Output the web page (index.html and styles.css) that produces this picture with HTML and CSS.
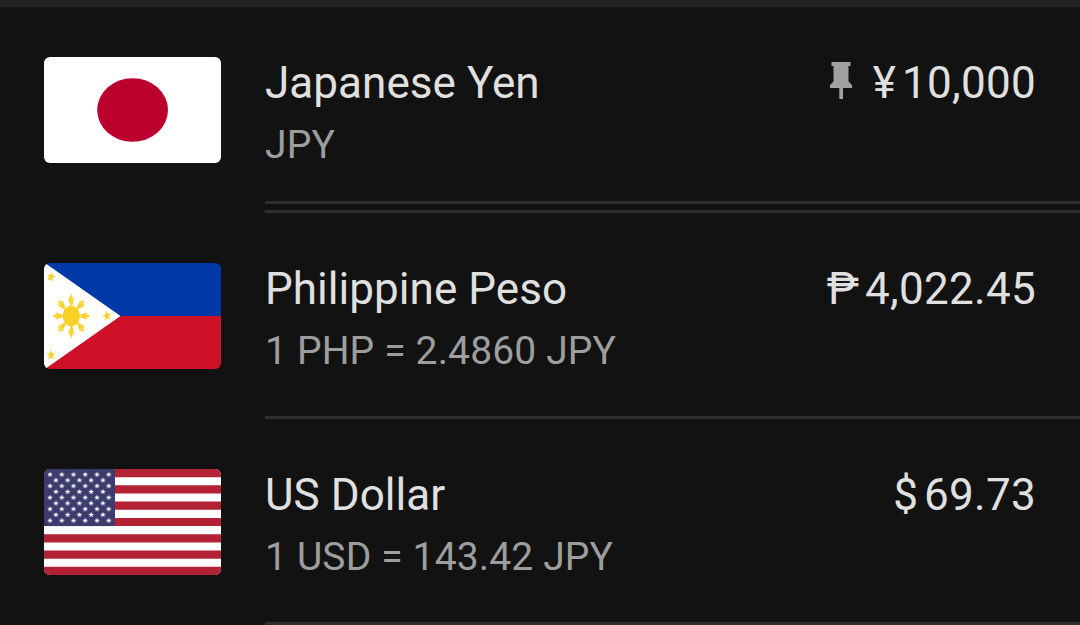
FILE: index.html
```
<!DOCTYPE html>
<html lang="en">
<head>
<meta charset="UTF-8" />
<meta name="viewport" content="width=device-width, initial-scale=1.0" />
<title>Currency Converter</title>
<link rel="stylesheet" href="styles.css">
</head>
<body>

<div class="top-bar"></div>

<div class="currency-list">
  <!-- Base currency -->
  <div class="row row-base">
    <svg class="flag" viewBox="0 0 177 106">
      <rect width="177" height="106" fill="#fff"/>
      <ellipse cx="88.6" cy="53" rx="35.4" ry="31.8" fill="#bc002d"/>
    </svg>
    <div class="row-body">
      <div class="info">
        <div class="name">Japanese Yen</div>
        <div class="rate">JPY</div>
      </div>
      <div class="amount">
        <svg class="pin" viewBox="0 0 22 37">
          <path d="M1.5 0H20.5V4H18.5V19.5L22 23V26H13V37H9.3V26H0V23L3.5 19.5V4H1.5Z" fill="#a0a0a0"/>
        </svg>
        <span class="symbol">¥</span><span class="value">10,000</span>
      </div>
    </div>
  </div>

  <div class="row">
    <svg class="flag" viewBox="0 0 177 106">
      <defs>
        <path id="star" d="M0-5L1.2-1.6 4.8-1.5 1.9.6 2.9 4 0 2 -2.9 4 -1.9.6 -4.8-1.5 -1.2-1.6Z"/>
        <path id="ray" d="M-.8-9L-1-21.5H1L.8-9ZM-.8-9L-3.6-18 -1.8-19.5 0-9ZM.8-9L3.6-18 1.8-19.5 0-9Z"/>
      </defs>
      <rect width="177" height="53" fill="#0038a8"/>
      <rect y="53" width="177" height="53" fill="#ce1126"/>
      <path d="M0 0H1L76.5 53 1 106H0Z" fill="#fff"/>
      <g fill="#fad024">
        <g transform="translate(27.3 53) scale(.84 1)">
          <circle r="10.3"/>
          <use href="#ray"/>
          <use href="#ray" transform="rotate(45)"/>
          <use href="#ray" transform="rotate(90)"/>
          <use href="#ray" transform="rotate(135)"/>
          <use href="#ray" transform="rotate(180)"/>
          <use href="#ray" transform="rotate(225)"/>
          <use href="#ray" transform="rotate(270)"/>
          <use href="#ray" transform="rotate(315)"/>
        </g>
        <use href="#star" transform="translate(7 14) rotate(12) scale(.95 1.1)"/>
        <use href="#star" transform="translate(63 53) rotate(-10) scale(.95 1.1)"/>
        <use href="#star" transform="translate(7 92) rotate(-5) scale(.95 1.1)"/>
      </g>
    </svg>
    <div class="row-body">
      <div class="info">
        <div class="name">Philippine Peso</div>
        <div class="rate">1 PHP = 2.4860 JPY</div>
      </div>
      <div class="amount">
        <span class="symbol">₱</span><span class="value">4,022.45</span>
      </div>
    </div>
  </div>

  <div class="row">
    <svg class="flag" viewBox="0 0 177 106">
      <defs>
        <pattern id="stars" width="11.75" height="11.5" patternUnits="userSpaceOnUse">
          <use href="#star" fill="#fff" transform="translate(6 5.6) scale(.6)"/>
        </pattern>
      </defs>
      <rect width="177" height="106" fill="#fff"/>
      <!-- 13 stripes, 8.154 high each -->
      <path d="M0 4.077H177M0 20.385H177M0 36.692H177M0 53H177M0 69.308H177M0 85.615H177M0 101.923H177" stroke="#b22234" stroke-width="8.154"/>
      <rect width="71" height="57.08" fill="#3c3b6e"/>
      <rect width="70.5" height="57.5" fill="url(#stars)"/>
      <rect width="58.75" height="46" fill="url(#stars)" transform="translate(5.9 5.75)"/>
    </svg>
    <div class="row-body">
      <div class="info">
        <div class="name">US Dollar</div>
        <div class="rate">1 USD = 143.42 JPY</div>
      </div>
      <div class="amount">
        <span class="symbol">$</span><span class="value">69.73</span>
      </div>
    </div>
  </div>
</div>

</body>
</html>
```

FILE: styles.css
```
* {
  box-sizing: border-box;
}

body {
  margin: 0;
  height: 625px;
  overflow: hidden;
  background-color: #121212;
  color: #e0e0e0;
  font-family: Roboto, sans-serif;
}

.top-bar {
  height: 7px;
  background-color: #222;
}

.row {
  display: flex;
  height: 206px;
  padding-left: 44px;
}

.flag {
  width: 177px;
  height: 106px;
  margin-top: 50px;
  margin-right: 44px;
  border-radius: 6px;
  flex-shrink: 0;
}

.row-body {
  flex: 1;
  display: flex;
  justify-content: space-between;
  padding-top: 50px;
  padding-right: 44px;
  border-bottom: 3px solid #2e2e2e;
}

/* Double line under the base currency */
.row-base .row-body {
  height: 197px;
}

.row-base {
  position: relative;
}

.row-base::after {
  content: "";
  position: absolute;
  left: 265px;
  right: 0;
  bottom: 0;
  height: 3px;
  background-color: #2e2e2e;
}

.name {
  font-size: 44px;
  line-height: 52px;
  letter-spacing: 0.05px;
}

.rate {
  margin-top: 13px;
  font-size: 39px;
  line-height: 47px;
  letter-spacing: 0.15px;
  color: #9e9e9e;
}

.amount {
  display: flex;
  align-items: flex-start;
  font-size: 44px;
  line-height: 52px;
}

.value {
  letter-spacing: 0.3px;
}

.symbol {
  margin-right: 6px;
}

.pin {
  width: 22px;
  height: 37px;
  margin-top: 5px;
  margin-right: 21px;
}
```
